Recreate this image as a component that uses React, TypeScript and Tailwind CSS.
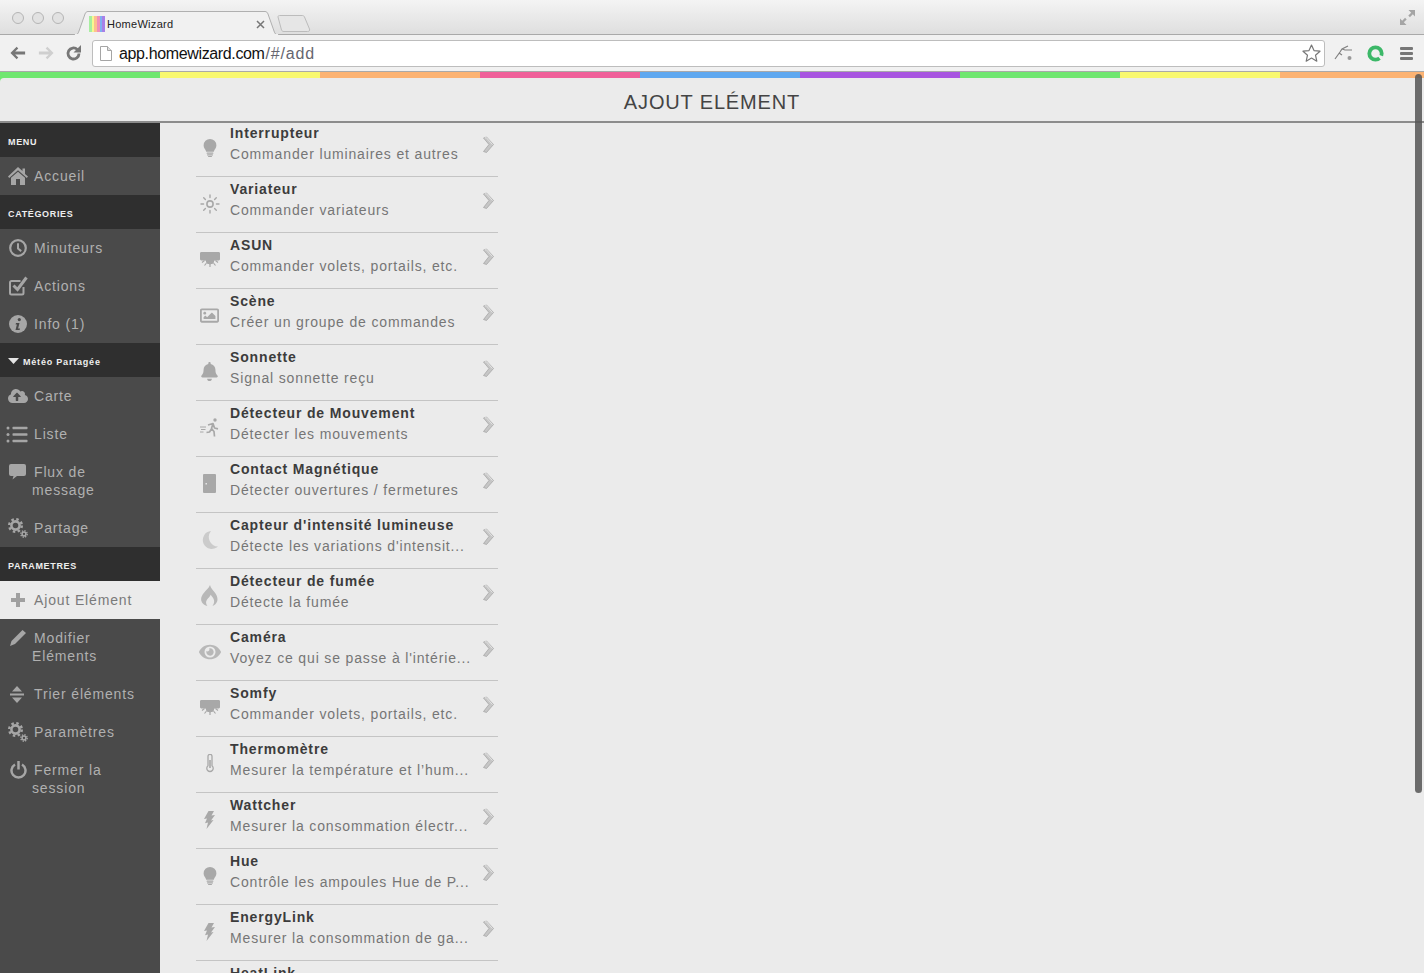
import type { ReactNode } from 'react'
import { FaBell, FaCloudUploadAlt, FaEye, FaRegImage } from 'react-icons/fa'

const SANS = 'font-["Liberation_Sans",Arial,sans-serif]'

const Bulb = () => (
  <svg width="14" height="18" viewBox="0 0 14 18" fill="currentColor">
    <path d="M7 0a6.400 6.400 0 0 1 6.400 6.400c0 2.600-2 3.700-2.600 6.300H3.200C2.600 10.100.6 9 .6 6.400A6.400 6.400 0 0 1 7 0z" />
    <rect x="3.600" y="13.500" width="6.800" height="1.300" rx=".6" />
    <rect x="4" y="15.300" width="6" height="1.200" rx=".6" />
    <rect x="5" y="17" width="4" height="1" rx=".5" />
  </svg>
)

const Sun = () => (
  <svg width="20" height="20" viewBox="0 0 20 20" fill="none" stroke="currentColor" strokeWidth="1.400" strokeLinecap="round">
    <circle cx="10" cy="10" r="3.100" strokeWidth="1.600" />
    <path d="M10 1v2.600M10 16.400V19M1 10h2.600M16.400 10H19M3.700 3.700l1.700 1.700M14.600 14.600l1.700 1.700M3.700 16.300l1.700-1.700M14.600 5.400l1.700-1.700" />
  </svg>
)

const Shutter = () => (
  <svg width="20" height="15" viewBox="0 0 20 15" fill="currentColor" stroke="currentColor">
    <rect x=".5" y=".5" width="19" height="7.500" rx=".5" />
    <circle cx="10" cy="8" r="4" />
    <path strokeWidth="1.200" fill="none" d="M10 12v3M6.500 11l-2 2.500M13.500 11l2 2.500M4.500 8.500l-2.500 2M15.500 8.500l2.500 2" />
  </svg>
)

const Runner = () => (
  <svg width="19" height="19" viewBox="0 0 19 19" fill="none" stroke="currentColor" strokeWidth="1.700" strokeLinejoin="round">
    <circle cx="15" cy="2" r="1.700" fill="currentColor" stroke="none" />
    <path d="M8 7l5-1.500 1.500 4.500 3.500.8M13 5.500l-1.500 5 2.500 3 .5 5M11.500 11l-2 3-3 .5" />
    <path strokeWidth="1" d="M0 9h6M1 11.500h4.500M0 14h3.500" />
  </svg>
)

const Door = () => (
  <svg width="13" height="19" viewBox="0 0 13 19" fill="currentColor">
    <path fillRule="evenodd" d="M1 0h11a1 1 0 0 1 1 1v17a1 1 0 0 1-1 1H1a1 1 0 0 1-1-1V1a1 1 0 0 1 1-1zm1.500 9v1.400h1.400V9z" />
  </svg>
)

const Moon = () => (
  <svg width="16" height="18" viewBox="0 0 16 18" fill="#cbcbcb">
    <path d="M9 0A9 9 0 1 0 16 15.500 9.500 9.500 0 0 1 9 0z" />
  </svg>
)

const Flame = () => (
  <svg width="17" height="21" viewBox="0 0 17 21" fill="#b8b8b8">
    <path d="M9 0c.6 3 2.600 4.700 4.600 7.200 2.500 3.200 3.400 6.300 2.600 9-.7 2.300-2.600 3.900-4.800 4.800 1.300-1.800 2-3.600 1.600-5.800-.4-2-1.800-3.600-3.300-5.500-.7 2-2.200 3-3.600 4.700-1.400 1.800-1.500 4.400.3 6.600C3 20 .9 18.200.3 15.700-.4 12.800.9 10.300 3 7.700 5.200 5 7.800 3.200 9 0z" />
  </svg>
)

const Thermo = () => (
  <svg width="8" height="19" viewBox="0 0 8 19" fill="none" stroke="currentColor">
    <path strokeWidth="1.300" d="M2 2.300a2 2 0 0 1 4 0v9.500a3.200 3.200 0 1 1-4 0z" />
    <path strokeWidth="1.600" d="M4 6v8" />
  </svg>
)

const Bolt = () => (
  <svg width="11" height="18" viewBox="0 0 11 18" fill="currentColor">
    <path d="M4.500 0h5.500L7.500 4.500 11 4 7 9.500l2.500-.5L2.500 18l1.500-6.500-3 .8L3 7.500 0 8z" />
  </svg>
)

const Chevron = () => (
  <svg width="13" height="18" viewBox="0 0 13 18" className="shrink-0">
    <path d="M1.500 2 L4.500 1 L11.500 8.500 L4.500 16.500 L1.500 15.500 L7 8.500z" fill="#c6c6c6" stroke="#a0a0a0" strokeWidth=".7" strokeLinejoin="round" />
    <path d="M2.800 2 L4.300 1.600 L10.500 8.500" fill="none" stroke="#f4f4f4" strokeWidth=".7" />
  </svg>
)

const Home = () => (
  <svg width="20" height="18" viewBox="0 0 20 18" fill="currentColor">
    <path d="M10 0l4.500 4V1.500H17V7l3 2.600-1.200 1.400L10 3.300 1.200 11 0 9.600z" />
    <path d="M3 10.800L10 4.800l7 6V18h-5v-6H8v6H3z" />
  </svg>
)

const Clock = () => (
  <svg width="18" height="18" viewBox="0 0 18 18" fill="none" stroke="currentColor">
    <circle cx="9" cy="9" r="7.800" strokeWidth="2.200" />
    <path strokeWidth="2" d="M9 4.200V9.500l3.200 2.600" />
  </svg>
)

const CheckSquare = () => (
  <svg width="19" height="20" viewBox="0 0 19 20" fill="none" stroke="currentColor">
    <path strokeWidth="2" d="M14.500 11v6a1.500 1.500 0 0 1-1.500 1.500H2.500A1.500 1.500 0 0 1 1 17V6.500A1.500 1.500 0 0 1 2.500 5h9" />
    <path strokeWidth="3" d="M4.500 9.500L8.500 13.500 17.500 1.500" />
  </svg>
)

const Info = () => (
  <svg width="18" height="18" viewBox="0 0 18 18">
    <circle cx="9" cy="9" r="9" fill="currentColor" />
    <circle cx="10.300" cy="4.600" r="1.600" fill="#4a4a4a" />
    <path d="M7 8h3.500l-1.400 5.500H11l-.4 1.500H6.500l1.400-5.500H6.600z" fill="#4a4a4a" />
  </svg>
)

const Gears = () => (
  <svg width="20" height="20" viewBox="0 0 20 20" fill="none" stroke="currentColor">
    <circle cx="7.500" cy="7.500" r="4.100" strokeWidth="2.600" />
    <circle cx="7.500" cy="7.500" r="6.300" strokeWidth="2.400" strokeDasharray="2.500 2.450" />
    <circle cx="16" cy="16" r="1.900" strokeWidth="1.500" />
    <circle cx="16" cy="16" r="3.200" strokeWidth="1.400" strokeDasharray="1.300 1.210" />
  </svg>
)

const Plus = () => (
  <svg width="14" height="14" viewBox="0 0 14 14" fill="currentColor">
    <path d="M5 0h4v5h5v4H9v5H5V9H0V5h5z" />
  </svg>
)

const Pencil = () => (
  <svg width="16" height="16" viewBox="0 0 16 16" fill="currentColor">
    <path d="M12.500 0L16 3 5 14l-5 2 1.500-5z" />
  </svg>
)

const Power = () => (
  <svg width="17" height="18" viewBox="0 0 17 18" fill="none" stroke="currentColor" strokeWidth="2.500">
    <path d="M5 3.500a7 7 0 1 0 7 0" />
    <path d="M8.500 0v8.500" />
  </svg>
)

const SortIcon = () => (
  <svg width="16" height="17" viewBox="0 0 16 17" fill="currentColor" className="-ml-[2px]">
    <path d="M8 0l5 5.500H3zM1 7.500h14v2H1zM3 11.500h10L8 17z" />
  </svg>
)

const ListIcon = () => (
  <svg width="22" height="17" viewBox="0 0 22 17" fill="currentColor" className="-ml-[2px]">
    <circle cx="2" cy="2" r="1.500" />
    <circle cx="2" cy="8.500" r="1.500" />
    <circle cx="2" cy="15" r="1.500" />
    <rect x="6.500" y=".8" width="15" height="2.400" rx=".6" />
    <rect x="6.500" y="7.300" width="15" height="2.400" rx=".6" />
    <rect x="6.500" y="13.800" width="15" height="2.400" rx=".6" />
  </svg>
)

const Bubble = () => (
  <svg width="17" height="16" viewBox="0 0 17 16" fill="currentColor" className="-ml-[1px]">
    <path d="M2 0h13a2 2 0 0 1 2 2v8a2 2 0 0 1-2 2H8l-4.500 3.500L4.500 12H2a2 2 0 0 1-2-2V2a2 2 0 0 1 2-2z" />
  </svg>
)

type Row = { title: string; sub: string; icon: ReactNode }

const rows: Row[] = [
  { title: 'Interrupteur', sub: 'Commander luminaires et autres', icon: <Bulb /> },
  { title: 'Variateur', sub: 'Commander variateurs', icon: <Sun /> },
  { title: 'ASUN', sub: 'Commander volets, portails, etc.', icon: <Shutter /> },
  { title: 'Scène', sub: 'Créer un groupe de commandes', icon: <FaRegImage size={19} /> },
  { title: 'Sonnette', sub: 'Signal sonnette reçu', icon: <FaBell size={19} /> },
  { title: 'Détecteur de Mouvement', sub: 'Détecter les mouvements', icon: <Runner /> },
  { title: 'Contact Magnétique', sub: 'Détecter ouvertures / fermetures', icon: <Door /> },
  { title: "Capteur d'intensité lumineuse", sub: "Détecte les variations d'intensit...", icon: <Moon /> },
  { title: 'Détecteur de fumée', sub: 'Détecte la fumée', icon: <Flame /> },
  { title: 'Caméra', sub: "Voyez ce qui se passe à l'intérie...", icon: <FaEye size={22} className="text-[#b8b8b8]" /> },
  { title: 'Somfy', sub: 'Commander volets, portails, etc.', icon: <Shutter /> },
  { title: 'Thermomètre', sub: 'Mesurer la température et l’hum...', icon: <Thermo /> },
  { title: 'Wattcher', sub: 'Mesurer la consommation électr...', icon: <Bolt /> },
  { title: 'Hue', sub: 'Contrôle les ampoules Hue de P...', icon: <Bulb /> },
  { title: 'EnergyLink', sub: 'Mesurer la consommation de ga...', icon: <Bolt /> },
  { title: 'HeatLink', sub: 'Commander le chauffage', icon: <Flame /> },
]

const Heading = ({ children }: { children: ReactNode }) => (
  <div className="flex h-[34px] items-center bg-[#2f2f2f] pl-2 pt-[5px] text-[9px] font-bold tracking-[0.65px] text-[#eeeeee]">
    {children}
  </div>
)

const Item = ({ icon, label, active, two }: { icon: ReactNode; label: string; active?: boolean; two?: boolean }) => (
  <div
    className={`flex ${two ? 'h-[56px]' : 'h-[38px]'} pl-[4px] pt-[10px] text-[14px] leading-[18px] tracking-[0.85px] ${
      active ? 'bg-[#ebebeb] text-[#7a7a7a]' : 'text-[#b0b0b0]'
    }`}
  >
    <div className={`flex h-[18px] w-[28px] shrink-0 items-center justify-center ${active ? 'text-[#a0a0a0]' : 'text-[#a6a6a6]'}`}>
      {icon}
    </div>
    <div className="w-[112px] indent-[2px]">{label}</div>
  </div>
)

const BarColors = ['bg-[#70e770]', 'bg-[#f8f870]', 'bg-[#fcb373]', 'bg-[#f0609a]', 'bg-[#5fa8f0]', 'bg-[#a855e0]', 'bg-[#70e770]', 'bg-[#f8f870]', 'bg-[#fcb373]']

function BrowserChrome() {
  return (
    <div className="h-[72px] shrink-0 border-b border-[#a9a9a9] bg-[#f1f1f1]">
      {/* tab strip */}
      <div className="relative h-[35px] bg-gradient-to-b from-[#f4f4f4] to-[#dedede]">
        <div className="flex gap-[8px] pl-[12px] pt-[12px]">
          <div className="h-[12px] w-[12px] rounded-full border border-[#b5b5b5] bg-[#e2e2e2]" />
          <div className="h-[12px] w-[12px] rounded-full border border-[#b5b5b5] bg-[#e2e2e2]" />
          <div className="h-[12px] w-[12px] rounded-full border border-[#b5b5b5] bg-[#e2e2e2]" />
        </div>
        <div className="absolute left-0 right-0 bottom-0 h-px bg-[#a9a9a9]" />
        <svg width="210" height="24" viewBox="0 0 210 24" className="absolute left-[74px] top-[11px]">
          <path d="M0 24c3 0 4-1 5-4L11 3c.5-1.500 1.500-2.500 3-2.500h177c1.500 0 2.500 1 3 2.500l6 17c1 3 2 4 5 4z" fill="#f1f1f1" stroke="#b0b0b0" />
          <path d="M1 24h203" stroke="#f1f1f1" strokeWidth="2" />
        </svg>
        <svg width="34" height="18" viewBox="0 0 34 18" className="absolute left-[277px] top-[15px]">
          <path d="M1 2c0-1 .5-1.500 1.500-1.500h23c1 0 1.500.5 2 1.500l5 12c.4 1.500 0 2.500-2 2.500H7c-1.500 0-2-.5-2.500-1.500z" fill="#e6e6e6" stroke="#bcbcbc" />
        </svg>
        <div className="absolute left-[89px] top-[16px] flex h-4 w-4">
          <div className="w-1/6 bg-[#a8eea0]" />
          <div className="w-1/6 bg-[#f8f890]" />
          <div className="w-1/6 bg-[#fcc090]" />
          <div className="w-1/6 bg-[#f090b8]" />
          <div className="w-1/6 bg-[#80b0f0]" />
          <div className="w-1/6 bg-[#a880e8]" />
        </div>
        <span className="absolute left-[107px] top-[16px] text-[11px] leading-4 tracking-[0.28px] text-[#222222]">HomeWizard</span>
        <svg width="9" height="9" viewBox="0 0 9 9" className="absolute left-[256px] top-[20px]" stroke="#777777" strokeWidth="1.500">
          <path d="M1 1l7 7M8 1l-7 7" />
        </svg>
        <svg width="15" height="15" viewBox="0 0 15 15" className="absolute left-[1400px] top-[10px]" fill="#a5a5a5">
          <path d="M8.500 0H15v6.500l-2.200-2.200-2.900 2.900-1.600-1.600 2.900-2.900zM6.500 15H0V8.500l2.200 2.200 2.900-2.900 1.600 1.600-2.900 2.900z" />
        </svg>
      </div>
      {/* toolbar */}
      <div className="flex h-[36px] items-center pl-[10px] pr-[10px]">
        <svg width="16" height="14" viewBox="0 0 18 14" fill="#777777">
          <path d="M7.500 0l1.800 1.800L5.800 5.400H17v3.200H5.800l3.500 3.600L7.500 14 .5 7z" />
        </svg>
        <svg width="16" height="14" viewBox="0 0 18 14" fill="#cfcfcf" className="ml-[12px]">
          <path d="M10.500 0L8.700 1.800l3.500 3.600H1v3.200h11.200l-3.500 3.600 1.800 1.800 7-7z" />
        </svg>
        <svg width="17" height="17" viewBox="0 0 17 17" className="ml-[11px]">
          <path d="M14 8.500a5.500 5.500 0 1 1-1.700-4" fill="none" stroke="#777777" strokeWidth="2.800" />
          <path d="M16 0v7.500H8.500z" fill="#777777" />
        </svg>
        <div className="ml-[10px] flex h-[27px] w-[1233px] items-center rounded-[3px] border border-[#bdbdbd] bg-white pl-[7px] pr-[3px]">
          <svg width="12" height="15" viewBox="0 0 12 15">
            <path d="M.5.500h7l4 4v10H.5z" fill="#ffffff" stroke="#a5a5a5" />
            <path d="M7.500.500v4h4" fill="#e0e0e0" stroke="#a5a5a5" />
          </svg>
          <span className="ml-[7px] pt-[2px] text-[16px] leading-5 tracking-[-0.36px] text-[#111111]">
            app.homewizard.com
            <span className="pl-[1px] tracking-[0.8px] text-[#66666f]">/#/add</span>
          </span>
          <svg width="19" height="18" viewBox="0 0 19 18" className="ml-auto">
            <path d="M9.500 1l2.500 5.600 6 .6-4.500 4 1.300 6-5.300-3.100-5.300 3.100 1.300-6-4.500-4 6-.6z" fill="#ffffff" stroke="#777777" strokeWidth="1.200" strokeLinejoin="round" />
          </svg>
        </div>
        <svg width="20" height="16" viewBox="0 0 20 16" className="ml-[9px]" fill="none" stroke="#808080" strokeWidth="1.200">
          <path d="M1 14l5-7 2-3 6-3M8 4l3 1h7M5 8l3 2" />
          <circle cx="15.500" cy="13" r="2" fill="#999999" stroke="none" />
        </svg>
        <svg width="17" height="17" viewBox="0 0 17 17" className="ml-[13px]">
          <circle cx="8.500" cy="8.500" r="6.200" fill="none" stroke="#3cb868" strokeWidth="3.800" />
          <path d="M8.500 8.500l8 3-2 4z" fill="#f1f1f1" />
        </svg>
        <div className="ml-[16px] flex w-[13px] flex-col gap-[2px]">
          <div className="h-[3px] rounded-[1px] bg-[#777777]" />
          <div className="h-[3px] rounded-[1px] bg-[#777777]" />
          <div className="h-[3px] rounded-[1px] bg-[#777777]" />
        </div>
      </div>
    </div>
  )
}

export default function App() {
  return (
    <div className={`relative flex h-[973px] w-[1424px] flex-col overflow-hidden bg-[#ebebeb] ${SANS}`}>
      <BrowserChrome />

      <div className="flex h-[6px] shrink-0">
        {BarColors.map((c, i) => (
          <div key={i} className={`h-full w-[160px] shrink-0 ${c}`} />
        ))}
      </div>

      <div className="shrink-0 bg-[#70e770]">
        <header className="flex h-[45px] items-center justify-center rounded-tl-[4px] border-b-2 border-[#8c8c8c] bg-[#ebebeb] pt-[5px] text-[20px] tracking-[0.85px] text-[#444444]">
          AJOUT ELÉMENT
        </header>
      </div>

      <div className="flex min-h-0 flex-1">
        <aside className="w-[160px] shrink-0 bg-[#4a4a4a]">
          <Heading>MENU</Heading>
          <Item icon={<Home />} label="Accueil" />
          <Heading>CATÉGORIES</Heading>
          <Item icon={<Clock />} label="Minuteurs" />
          <Item icon={<CheckSquare />} label="Actions" />
          <Item icon={<Info />} label="Info (1)" />
          <div className="flex h-[34px] items-center bg-[#2f2f2f] pl-2 pt-[5px] text-[9px] font-bold tracking-[0.8px] text-[#eeeeee]">
            <svg width="11" height="6" viewBox="0 0 11 6" fill="#e5e5e5" className="mr-1 -mt-1">
              <path d="M0 0h11L5.500 6z" />
            </svg>
            Météo Partagée
          </div>
          <Item icon={<FaCloudUploadAlt size={20} />} label="Carte" />
          <Item icon={<ListIcon />} label="Liste" />
          <Item icon={<Bubble />} label="Flux de message" two />
          <Item icon={<Gears />} label="Partage" />
          <Heading>PARAMETRES</Heading>
          <Item icon={<Plus />} label="Ajout Elément" active />
          <Item icon={<Pencil />} label="Modifier Eléments" two />
          <Item icon={<SortIcon />} label="Trier éléments" />
          <Item icon={<Gears />} label="Paramètres" />
          <Item icon={<Power />} label="Fermer la session" two />
        </aside>

        <main className="min-w-0 flex-1 -mt-[2px] pl-[36px]">
          <div className="w-[302px]">
            {rows.map((r) => (
              <div key={r.title} className="flex h-[56px] items-center border-b border-[#c4c4c4] pr-[3px]">
                <div className="-mt-[2px] flex w-[27px] shrink-0 justify-center text-[#a8a8a8]">{r.icon}</div>
                <div className="ml-[7px] w-[241px] -mt-[10px] whitespace-nowrap text-[14px] leading-[21px] tracking-[0.85px]">
                  <div className="font-bold text-[#3c3c3c]">{r.title}</div>
                  <div className="text-[#767676]">{r.sub}</div>
                </div>
                <div className="ml-auto -mt-[7px]">
                  <Chevron />
                </div>
              </div>
            ))}
          </div>
        </main>
      </div>

      {/* page scrollbar */}
      <div className="absolute left-[1415px] top-[74px] h-[719px] w-[7px] rounded-full bg-[#555555]/85" />
    </div>
  )
}
